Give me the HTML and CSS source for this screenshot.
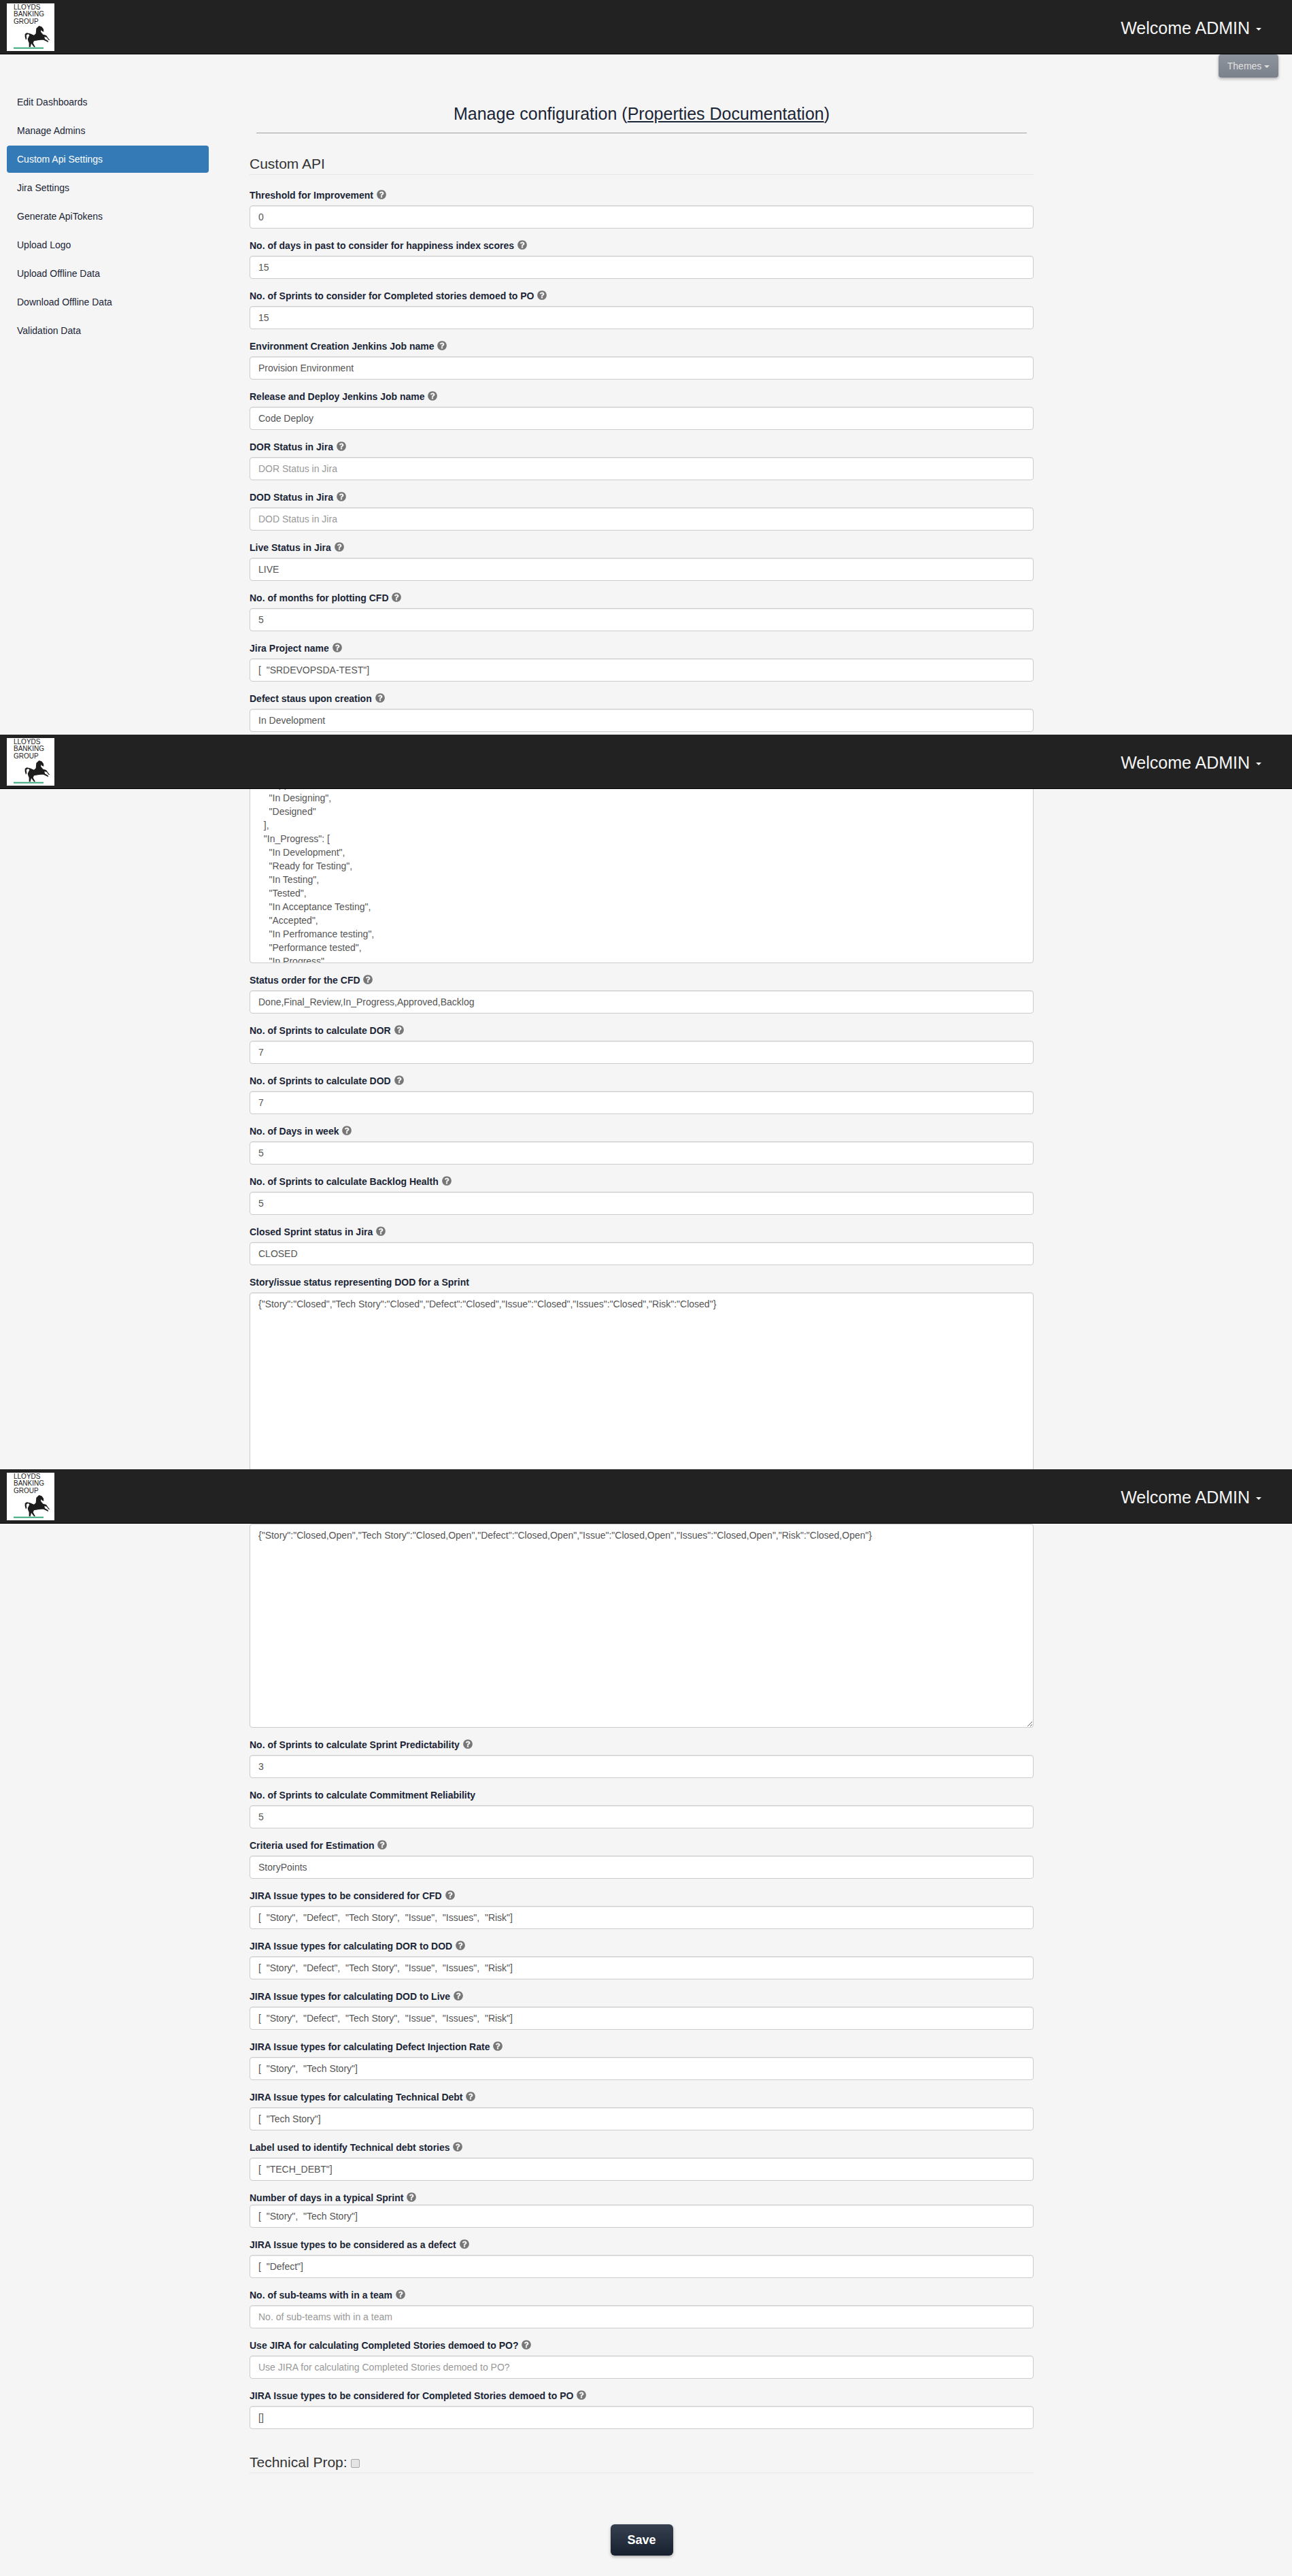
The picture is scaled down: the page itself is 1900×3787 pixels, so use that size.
FILE: index.html
```html
<!DOCTYPE html>
<html>
<head>
    <title>Manage configuration</title>
    <link rel="stylesheet" href="styles.css">
</head>
<body>
    <svg class="defs">
        <symbol id="help" viewBox="0 0 1792 1792">
            <path d="M1024 1376v-192q0-14-9-23t-23-9h-192q-14 0-23 9t-9 23v192q0 14 9 23t23 9h192q14 0 23-9t9-23zm256-672q0-88-55.5-163t-138.5-116-170-41q-243 0-371 213-15 24 8 42l132 100q7 6 19 6 16 0 25-12 53-68 86-92 34-24 86-24 48 0 85.5 26t37.5 59q0 38-20 61t-68 45q-63 28-115.5 86.5t-52.5 125.5v36q0 14 9 23t23 9h192q14 0 23-9t9-23q0-19 21.5-49.5t54.5-49.5q32-18 49-28.5t46-35 44.5-48 28-60.5 12.5-81zm384 192q0 209-103 385.5t-279.5 279.5-385.5 103-385.5-103-279.5-279.5-103-385.5 103-385.5 279.5-279.5 385.5-103 385.5 103 279.5 279.5 103 385.5z"/>
        </symbol>
        <symbol id="horse" viewBox="30 15 210 210">
            <path d="M160 125 L172 114 L184 118 L192 128 L193 140 L186 138 L182 132 L180 140 L190 152 L204 156 L214 170 L220 178 L214 176 L206 165 L196 162 L198 172 L212 180 L213 187 L206 183 L192 176 L182 176 L168 178 L150 181 L146 190 L156 208 L150 208 L138 192 L134 208 L128 208 L128 190 L124 180 L122 172 L130 155 L124 150 L116 155 L118 170 L114 176 L110 162 L110 150 L118 145 L132 148 L150 155 L158 148 Z" fill="#1c1c1c"/>
            <rect x="60" y="209" width="132" height="6" fill="#3aa57a"/>
        </symbol>
    </svg>

    <!-- the header is fixed on the real page, so it shows up three times in the capture -->
    <header class="topbar topbar-1">
        <div class="logo">
            <svg class="logo-art"><use href="#horse"/></svg>
            <div class="logo-text">LLOYDS<br>BANKING<br>GROUP</div>
        </div>
        <a class="welcome">Welcome ADMIN <span class="caret"></span></a>
    </header>
    <header class="topbar topbar-2">
        <div class="logo">
            <svg class="logo-art"><use href="#horse"/></svg>
            <div class="logo-text">LLOYDS<br>BANKING<br>GROUP</div>
        </div>
        <a class="welcome">Welcome ADMIN <span class="caret"></span></a>
    </header>
    <header class="topbar topbar-3">
        <div class="logo">
            <svg class="logo-art"><use href="#horse"/></svg>
            <div class="logo-text">LLOYDS<br>BANKING<br>GROUP</div>
        </div>
        <a class="welcome">Welcome ADMIN <span class="caret"></span></a>
    </header>

    <div class="page">
        <div class="theme-row">
            <button class="btn-themes" type="button">Themes <span class="caret caret-small"></span></button>
        </div>

        <div class="columns">
            <ul class="side-nav">
                <li><a>Edit Dashboards</a></li>
                <li><a>Manage Admins</a></li>
                <li class="active"><a>Custom Api Settings</a></li>
                <li><a>Jira Settings</a></li>
                <li><a>Generate ApiTokens</a></li>
                <li><a>Upload Logo</a></li>
                <li><a>Upload Offline Data</a></li>
                <li><a>Download Offline Data</a></li>
                <li><a>Validation Data</a></li>
            </ul>

            <form class="config-form">
                <h3 class="page-title">Manage configuration (<a href="#">Properties Documentation</a>)</h3>
                <hr class="title-rule">

                <div class="legend legend-first">Custom API</div>

                <div class="field">
                    <label>Threshold for Improvement <svg class="help"><use href="#help"/></svg></label>
                    <input type="text" value="0">
                </div>
                <div class="field">
                    <label>No. of days in past to consider for happiness index scores <svg class="help"><use href="#help"/></svg></label>
                    <input type="text" value="15">
                </div>
                <div class="field">
                    <label>No. of Sprints to consider for Completed stories demoed to PO <svg class="help"><use href="#help"/></svg></label>
                    <input type="text" value="15">
                </div>
                <div class="field">
                    <label>Environment Creation Jenkins Job name <svg class="help"><use href="#help"/></svg></label>
                    <input type="text" value="Provision Environment">
                </div>
                <div class="field">
                    <label>Release and Deploy Jenkins Job name <svg class="help"><use href="#help"/></svg></label>
                    <input type="text" value="Code Deploy">
                </div>
                <div class="field">
                    <label>DOR Status in Jira <svg class="help"><use href="#help"/></svg></label>
                    <input type="text" placeholder="DOR Status in Jira">
                </div>
                <div class="field">
                    <label>DOD Status in Jira <svg class="help"><use href="#help"/></svg></label>
                    <input type="text" placeholder="DOD Status in Jira">
                </div>
                <div class="field">
                    <label>Live Status in Jira <svg class="help"><use href="#help"/></svg></label>
                    <input type="text" value="LIVE">
                </div>
                <div class="field">
                    <label>No. of months for plotting CFD <svg class="help"><use href="#help"/></svg></label>
                    <input type="text" value="5">
                </div>
                <div class="field">
                    <label>Jira Project name <svg class="help"><use href="#help"/></svg></label>
                    <input type="text" value="[  &quot;SRDEVOPSDA-TEST&quot;]">
                </div>
                <div class="field">
                    <label>Defect staus upon creation <svg class="help"><use href="#help"/></svg></label>
                    <input type="text" value="In Development">
                </div>
                <div class="field">
                    <label>Status mapping for the CFD</label>
                    <textarea class="no-grip" spellcheck="false">  "Design": [
    "Approved",
    "In Designing",
    "Designed"
  ],
  "In_Progress": [
    "In Development",
    "Ready for Testing",
    "In Testing",
    "Tested",
    "In Acceptance Testing",
    "Accepted",
    "In Perfromance testing",
    "Performance tested",
    "In Progress"
  ]
}</textarea>
                </div>
                <div class="field">
                    <label>Status order for the CFD <svg class="help"><use href="#help"/></svg></label>
                    <input type="text" value="Done,Final_Review,In_Progress,Approved,Backlog">
                </div>
                <div class="field">
                    <label>No. of Sprints to calculate DOR <svg class="help"><use href="#help"/></svg></label>
                    <input type="text" value="7">
                </div>
                <div class="field">
                    <label>No. of Sprints to calculate DOD <svg class="help"><use href="#help"/></svg></label>
                    <input type="text" value="7">
                </div>
                <div class="field">
                    <label>No. of Days in week <svg class="help"><use href="#help"/></svg></label>
                    <input type="text" value="5">
                </div>
                <div class="field">
                    <label>No. of Sprints to calculate Backlog Health <svg class="help"><use href="#help"/></svg></label>
                    <input type="text" value="5">
                </div>
                <div class="field">
                    <label>Closed Sprint status in Jira <svg class="help"><use href="#help"/></svg></label>
                    <input type="text" value="CLOSED">
                </div>
                <div class="field">
                    <label>Story/issue status representing DOD for a Sprint</label>
                    <textarea class="no-grip" spellcheck="false">{"Story":"Closed","Tech Story":"Closed","Defect":"Closed","Issue":"Closed","Issues":"Closed","Risk":"Closed"}</textarea>
                </div>
                <div class="field">
                    <label>Story/issue status representing DOR for a Sprint</label>
                    <textarea spellcheck="false">{"Story":"Closed,Open","Tech Story":"Closed,Open","Defect":"Closed,Open","Issue":"Closed,Open","Issues":"Closed,Open","Risk":"Closed,Open"}</textarea>
                </div>
                <div class="field">
                    <label>No. of Sprints to calculate Sprint Predictability <svg class="help"><use href="#help"/></svg></label>
                    <input type="text" value="3">
                </div>
                <div class="field">
                    <label>No. of Sprints to calculate Commitment Reliability</label>
                    <input type="text" value="5">
                </div>
                <div class="field">
                    <label>Criteria used for Estimation <svg class="help"><use href="#help"/></svg></label>
                    <input type="text" value="StoryPoints">
                </div>
                <div class="field">
                    <label>JIRA Issue types to be considered for CFD <svg class="help"><use href="#help"/></svg></label>
                    <input type="text" value="[  &quot;Story&quot;,  &quot;Defect&quot;,  &quot;Tech Story&quot;,  &quot;Issue&quot;,  &quot;Issues&quot;,  &quot;Risk&quot;]">
                </div>
                <div class="field">
                    <label>JIRA Issue types for calculating DOR to DOD <svg class="help"><use href="#help"/></svg></label>
                    <input type="text" value="[  &quot;Story&quot;,  &quot;Defect&quot;,  &quot;Tech Story&quot;,  &quot;Issue&quot;,  &quot;Issues&quot;,  &quot;Risk&quot;]">
                </div>
                <div class="field">
                    <label>JIRA Issue types for calculating DOD to Live <svg class="help"><use href="#help"/></svg></label>
                    <input type="text" value="[  &quot;Story&quot;,  &quot;Defect&quot;,  &quot;Tech Story&quot;,  &quot;Issue&quot;,  &quot;Issues&quot;,  &quot;Risk&quot;]">
                </div>
                <div class="field">
                    <label>JIRA Issue types for calculating Defect Injection Rate <svg class="help"><use href="#help"/></svg></label>
                    <input type="text" value="[  &quot;Story&quot;,  &quot;Tech Story&quot;]">
                </div>
                <div class="field">
                    <label>JIRA Issue types for calculating Technical Debt <svg class="help"><use href="#help"/></svg></label>
                    <input type="text" value="[  &quot;Tech Story&quot;]">
                </div>
                <div class="field">
                    <label>Label used to identify Technical debt stories <svg class="help"><use href="#help"/></svg></label>
                    <input type="text" value="[  &quot;TECH_DEBT&quot;]">
                </div>
                <div class="field field-tight">
                    <label>Number of days in a typical Sprint <svg class="help"><use href="#help"/></svg></label>
                    <input type="text" value="[  &quot;Story&quot;,  &quot;Tech Story&quot;]">
                </div>
                <div class="field">
                    <label>JIRA Issue types to be considered as a defect <svg class="help"><use href="#help"/></svg></label>
                    <input type="text" value="[  &quot;Defect&quot;]">
                </div>
                <div class="field">
                    <label>No. of sub-teams with in a team <svg class="help"><use href="#help"/></svg></label>
                    <input type="text" placeholder="No. of sub-teams with in a team">
                </div>
                <div class="field">
                    <label>Use JIRA for calculating Completed Stories demoed to PO? <svg class="help"><use href="#help"/></svg></label>
                    <input type="text" placeholder="Use JIRA for calculating Completed Stories demoed to PO?">
                </div>
                <div class="field">
                    <label>JIRA Issue types to be considered for Completed Stories demoed to PO <svg class="help"><use href="#help"/></svg></label>
                    <input type="text" value="[]">
                </div>

                <div class="legend legend-second">Technical Prop: <input class="legend-check" type="checkbox" disabled></div>

                <button class="btn-save" type="button">Save</button>
            </form>
        </div>
    </div>
</body>
</html>
```

FILE: styles.css
```css
* {
    box-sizing: border-box;
}

body {
    font-family: "Liberation Sans", Arial, sans-serif;
    font-size: 14px;
    line-height: 20px;
    color: #1b2536;
    background-color: #f5f5f5;
    margin: 0;
    padding: 0;
}

.defs {
    display: none;
}

/* top bar */
.topbar {
    position: absolute;
    left: 0;
    width: 100%;
    height: 80px;
    display: flex;
    justify-content: space-between;
    align-items: center;
    padding: 0 45px 0 10px;
    background-color: #222;
    border-bottom: 1px solid #000;
    z-index: 10;
}

.topbar-1 {
    top: 0;
}

.topbar-2 {
    top: 1080px;
}

.topbar-3 {
    top: 2160px;
}

.logo {
    position: relative;
    width: 70px;
    height: 70px;
    background-color: #fff;
}

.logo-art {
    position: absolute;
    left: 0;
    top: 0;
    width: 70px;
    height: 70px;
}

.logo-text {
    position: absolute;
    left: 10px;
    top: 1.5px;
    font-size: 10px;
    line-height: 10.3px;
    color: #222;
}

.welcome {
    margin-top: 2px;
    font-size: 25px;
    line-height: 30px;
    color: #f5f5f5;
}

.caret {
    display: inline-block;
    width: 0;
    height: 0;
    margin-left: 2px;
    vertical-align: middle;
    border-top: 4px solid;
    border-right: 4px solid transparent;
    border-left: 4px solid transparent;
}

/* page */
.page {
    padding-top: 80px;
}

.theme-row {
    display: flex;
    justify-content: flex-end;
    padding-right: 20px;
}

.btn-themes {
    width: 88px;
    height: 34px;
    padding: 0;
    font-family: inherit;
    font-size: 14px;
    color: #e0e0e0;
    background: linear-gradient(to bottom, #8e949d, #7a818b);
    border: none;
    border-radius: 4px;
    box-shadow: 0 2px 4px rgba(0, 0, 0, 0.3);
}

.caret-small {
    margin-left: 0;
}

.columns {
    display: flex;
    align-items: flex-start;
    padding: 0 380px 30px 10px;
}

/* side menu */
.side-nav {
    list-style-type: none;
    width: 297px;
    margin: 16px 60px 0 0;
    padding: 0;
    flex-shrink: 0;
}

.side-nav li {
    margin-bottom: 2px;
}

.side-nav a {
    display: block;
    padding: 10px 15px;
    border-radius: 4px;
}

.side-nav .active a {
    color: #fff;
    background-color: #337ab7;
}

/* form */
.config-form {
    flex: 1;
    min-width: 0;
    display: flex;
    flex-direction: column;
}

.page-title {
    margin: 40px 0 15px;
    font-size: 25px;
    font-weight: normal;
    line-height: 26px;
    text-align: center;
}

.page-title a {
    color: inherit;
}

.title-rule {
    width: calc(100% - 20px);
    margin: 0 10px;
    border: none;
    border-top: 1px solid #a0a0a0;
}

.legend {
    font-size: 21px;
    line-height: 30px;
    color: #333;
    border-bottom: 1px solid #e5e5e5;
    margin-bottom: 20px;
}

.legend-first {
    margin-top: 30px;
}

.legend-second {
    margin-top: 19px;
}

.legend-check {
    appearance: none;
    width: 13px;
    height: 13px;
    margin: 0;
    vertical-align: -1px;
    background-color: #e4e4e4;
    border: 1px solid #a8a8a8;
    border-radius: 2px;
}

.field {
    margin-bottom: 15px;
}

.field label {
    display: block;
    height: 20px;
    margin-bottom: 5px;
    font-weight: bold;
}

.field-tight label {
    margin-bottom: 0;
}

.help {
    width: 16px;
    height: 16px;
    vertical-align: -2px;
    fill: #777;
}

.field input,
.field textarea {
    display: block;
    width: 100%;
    padding: 6px 12px;
    font-family: inherit;
    font-size: 14px;
    line-height: 20px;
    color: #555;
    background-color: #fff;
    border: 1px solid #ccc;
    border-radius: 4px;
    box-shadow: inset 0 1px 1px rgba(0, 0, 0, 0.075);
}

.field input {
    height: 34px;
}

.field input::placeholder {
    color: #999;
}

.field textarea {
    height: 300px;
}

.field textarea.no-grip {
    resize: none;
    overflow: hidden;
}

.btn-save {
    align-self: center;
    width: 92px;
    height: 46px;
    margin-top: 55px;
    padding: 0;
    font-family: inherit;
    font-size: 18px;
    font-weight: bold;
    color: #fff;
    background: linear-gradient(to bottom, #36404f, #16202f);
    border: none;
    border-radius: 6px;
    box-shadow: 0 2px 4px rgba(0, 0, 0, 0.3);
}
```
